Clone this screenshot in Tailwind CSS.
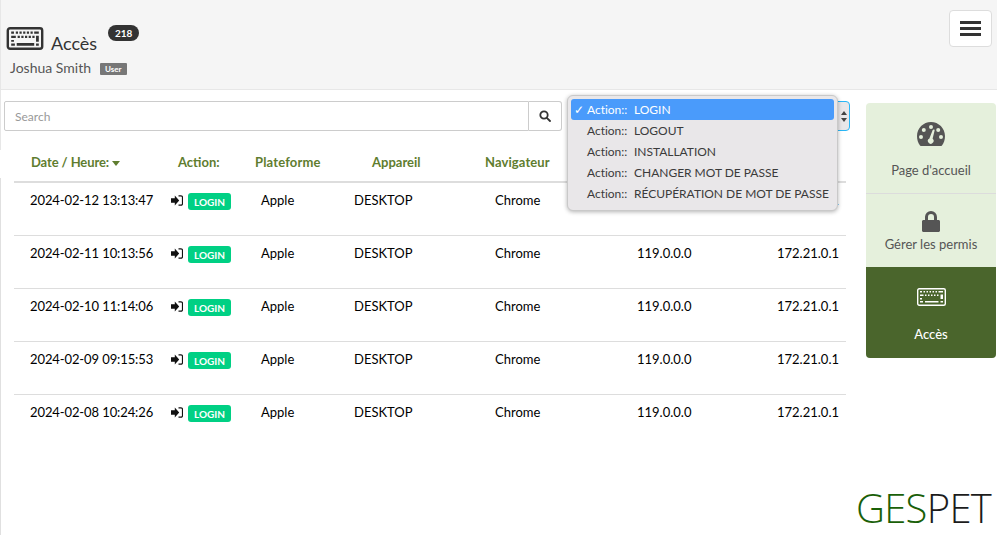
<!DOCTYPE html>
<html lang="fr">
<head>
  <meta charset="UTF-8"/>
  <title>Accès</title>
  <script src="https://cdn.jsdelivr.net/npm/@tailwindcss/browser@4"></script>
</head>
<body class="bg-white h-[535px] overflow-hidden font-['Lato','Liberation_Sans',sans-serif] text-[13px] text-black">

  <!-- Header -->
  <header class="h-[90px] bg-[#f5f5f5] border-b border-[#e7e7e7] border-l flex justify-between pl-[5px] pr-[5px]">
    <div>
      <div class="flex items-start pt-[25px] h-[57px]">
        <svg class="w-[38px] h-[23px] mt-[2px] text-[#333]" viewBox="0 0 40 25" fill="currentColor">
          <rect x="1.300" y="1.300" width="37.400" height="22.400" rx="2.500" fill="none" stroke="currentColor" stroke-width="2.600"/>
          <path d="M5 5h3v2.400H5zM10 5h2.400v2.400H10zM14 5h2.400v2.400H14zM18 5h2.400v2.400H18zM22 5h2.400v2.400H22zM26 5h2.400v2.400H26zM30 5h5v2.400h-5zM5 9.500h5v2.400H5zM12 9.500h2.400v2.400H12zM16 9.500h2.400v2.400H16zM20 9.500h2.400v2.400H20zM24 9.500h2.400v2.400H24zM28 9.500h2.400v2.400H28zM32 9.500h3v6.500h-3zM5 14h3v2H5zM5 18h4v2.400H5zM11 17.500h19v2.900H11zM32 18h3v2.400h-3z"/>
        </svg>
        <h1 class="text-[18px] leading-[22px] text-[#333] ml-[7px] mt-[7px]">Accès</h1>
        <span class="ml-[11px] w-[31px] h-[16px] rounded-full bg-[#333] text-white text-[10px] font-bold flex items-center justify-center">218</span>
      </div>
      <div class="flex items-center ml-[4px] mt-[1px]">
        <span class="text-[14px] leading-[20px] text-[#555]">Joshua Smith</span>
        <span class="ml-[9px] mt-[1px] px-[5px] h-[12px] bg-[#777] rounded-[1px] text-white text-[8px] font-bold flex items-center">User</span>
      </div>
    </div>
    <button class="mt-[10px] w-[43px] h-[37px] bg-white border border-[#ddd] rounded-[4px] flex flex-col items-center justify-center gap-[3px]">
      <span class="w-[21px] h-[3px] bg-[#333]"></span>
      <span class="w-[21px] h-[3px] bg-[#333]"></span>
      <span class="w-[21px] h-[3px] bg-[#333]"></span>
    </button>
  </header>

  <div class="flex relative">
    <!-- left edge line picks up again under the filters -->
    <span class="absolute left-0 top-[88px] bottom-0 w-px bg-[#e0e0e0]"></span>

    <main class="w-[866px]">
      <!-- Filters -->
      <div class="flex border-l border-[#e7e7e7] pl-[3px] pt-[11px] h-[60px]">
        <input placeholder="Search" class="w-[525px] h-[30px] border border-[#ccc] rounded-l-[2px] px-[10px] text-[12px] placeholder:text-[#999] bg-white"/>
        <button class="w-[33px] h-[30px] border border-l-0 border-[#ccc] rounded-r-[3px] flex items-center justify-center">
          <svg class="w-[12px] h-[12px]" viewBox="0 0 12 12" fill="none" stroke="#333" stroke-width="1.800"><circle cx="5" cy="5" r="3.700"/><path d="M7.800 7.800 11 11" stroke-linecap="round"/></svg>
        </button>
        <div class="ml-[5px] w-[283px] h-[30px] border border-[#29b6f6] rounded-[4px] bg-[#e9e7e9] flex items-center justify-end pr-[2px]">
          <svg class="w-[6px] h-[11px]" viewBox="0 0 6 11" fill="#444"><path d="M3 0 6 4H0zM3 11 0 7h6z"/></svg>
        </div>
      </div>

      <!-- Table -->
      <div class="ml-[14px] w-[832px]">
        <div class="flex h-[20px] box-content pt-[2px] pb-[9px] leading-[20px] font-bold text-[#5f7d2f] border-b-2 border-[#ddd] -mb-[3px]">
          <div class="w-[157px] pl-[17px] flex items-center gap-[3px]"><span class="tracking-[-0.1px]">Date / Heure:</span>
            <svg class="w-[8px] h-[5px] mt-[2px]" viewBox="0 0 8 5" fill="#5f7d2f"><path d="M0 0h8L4 5z"/></svg>
          </div>
          <div class="w-[84px] pl-[7px]">Action:</div>
          <div class="w-[99px] tracking-[0.15px]">Plateforme</div>
          <div class="w-[131px] pl-[18px]">Appareil</div>
          <div class="w-[152px] tracking-[0.1px]">Navigateur</div>
        </div>

        <div class="flex h-[56px] pt-[11px] leading-[18px] border-b border-[#ddd]">
          <div class="w-[157px] pl-[16px] tracking-[-0.1px]">2024-02-12 13:13:47</div>
          <div class="w-[84px] flex items-start gap-[5px] pt-[2px]">
            <svg class="w-[12px] h-[11px] mt-[2px]" viewBox="0 0 12 11"><path d="M0 3.300h3.800V.6l4.400 4.900-4.400 4.900V7.700H0z" fill="#111"/><path d="M7.500 .8H10a1.500 1.500 0 0 1 1.500 1.500v6.400A1.500 1.500 0 0 1 10 10.200H7.500" fill="none" stroke="#111" stroke-width="1.200"/></svg>
            <span class="w-[43px] h-[17px] bg-[#00d084] rounded-[3px] text-white text-[10px] font-bold flex items-center justify-center">LOGIN</span>
          </div>
          <div class="w-[99px] pl-[6px]">Apple</div>
          <div class="w-[131px]">DESKTOP</div>
          <div class="w-[152px] pl-[10px]">Chrome</div>
          <div class="w-[140px]">119.0.0.0</div>
          <div class="w-[61px] whitespace-nowrap">172.21.0.1</div>
        </div>
        <div class="flex h-[53px] pt-[8px] leading-[18px] border-b border-[#ddd]">
          <div class="w-[157px] pl-[16px] tracking-[-0.1px]">2024-02-11 10:13:56</div>
          <div class="w-[84px] flex items-start gap-[5px] pt-[2px]">
            <svg class="w-[12px] h-[11px] mt-[2px]" viewBox="0 0 12 11"><path d="M0 3.300h3.800V.6l4.400 4.900-4.400 4.900V7.700H0z" fill="#111"/><path d="M7.500 .8H10a1.500 1.500 0 0 1 1.500 1.500v6.400A1.500 1.500 0 0 1 10 10.200H7.500" fill="none" stroke="#111" stroke-width="1.200"/></svg>
            <span class="w-[43px] h-[17px] bg-[#00d084] rounded-[3px] text-white text-[10px] font-bold flex items-center justify-center">LOGIN</span>
          </div>
          <div class="w-[99px] pl-[6px]">Apple</div>
          <div class="w-[131px]">DESKTOP</div>
          <div class="w-[152px] pl-[10px]">Chrome</div>
          <div class="w-[140px]">119.0.0.0</div>
          <div class="w-[61px] whitespace-nowrap">172.21.0.1</div>
        </div>
        <div class="flex h-[53px] pt-[8px] leading-[18px] border-b border-[#ddd]">
          <div class="w-[157px] pl-[16px] tracking-[-0.1px]">2024-02-10 11:14:06</div>
          <div class="w-[84px] flex items-start gap-[5px] pt-[2px]">
            <svg class="w-[12px] h-[11px] mt-[2px]" viewBox="0 0 12 11"><path d="M0 3.300h3.800V.6l4.400 4.900-4.400 4.900V7.700H0z" fill="#111"/><path d="M7.500 .8H10a1.500 1.500 0 0 1 1.500 1.500v6.400A1.500 1.500 0 0 1 10 10.200H7.500" fill="none" stroke="#111" stroke-width="1.200"/></svg>
            <span class="w-[43px] h-[17px] bg-[#00d084] rounded-[3px] text-white text-[10px] font-bold flex items-center justify-center">LOGIN</span>
          </div>
          <div class="w-[99px] pl-[6px]">Apple</div>
          <div class="w-[131px]">DESKTOP</div>
          <div class="w-[152px] pl-[10px]">Chrome</div>
          <div class="w-[140px]">119.0.0.0</div>
          <div class="w-[61px] whitespace-nowrap">172.21.0.1</div>
        </div>
        <div class="flex h-[53px] pt-[8px] leading-[18px] border-b border-[#ddd]">
          <div class="w-[157px] pl-[16px] tracking-[-0.1px]">2024-02-09 09:15:53</div>
          <div class="w-[84px] flex items-start gap-[5px] pt-[2px]">
            <svg class="w-[12px] h-[11px] mt-[2px]" viewBox="0 0 12 11"><path d="M0 3.300h3.800V.6l4.400 4.900-4.400 4.900V7.700H0z" fill="#111"/><path d="M7.500 .8H10a1.500 1.500 0 0 1 1.500 1.500v6.400A1.500 1.500 0 0 1 10 10.200H7.500" fill="none" stroke="#111" stroke-width="1.200"/></svg>
            <span class="w-[43px] h-[17px] bg-[#00d084] rounded-[3px] text-white text-[10px] font-bold flex items-center justify-center">LOGIN</span>
          </div>
          <div class="w-[99px] pl-[6px]">Apple</div>
          <div class="w-[131px]">DESKTOP</div>
          <div class="w-[152px] pl-[10px]">Chrome</div>
          <div class="w-[140px]">119.0.0.0</div>
          <div class="w-[61px] whitespace-nowrap">172.21.0.1</div>
        </div>
        <div class="flex h-[53px] pt-[8px] leading-[18px]">
          <div class="w-[157px] pl-[16px] tracking-[-0.1px]">2024-02-08 10:24:26</div>
          <div class="w-[84px] flex items-start gap-[5px] pt-[2px]">
            <svg class="w-[12px] h-[11px] mt-[2px]" viewBox="0 0 12 11"><path d="M0 3.300h3.800V.6l4.400 4.900-4.400 4.900V7.700H0z" fill="#111"/><path d="M7.500 .8H10a1.500 1.500 0 0 1 1.500 1.500v6.400A1.500 1.500 0 0 1 10 10.200H7.500" fill="none" stroke="#111" stroke-width="1.200"/></svg>
            <span class="w-[43px] h-[17px] bg-[#00d084] rounded-[3px] text-white text-[10px] font-bold flex items-center justify-center">LOGIN</span>
          </div>
          <div class="w-[99px] pl-[6px]">Apple</div>
          <div class="w-[131px]">DESKTOP</div>
          <div class="w-[152px] pl-[10px]">Chrome</div>
          <div class="w-[140px]">119.0.0.0</div>
          <div class="w-[61px] whitespace-nowrap">172.21.0.1</div>
        </div>
      </div>
    </main>

    <!-- Side nav + logo -->
    <aside class="w-[131px] h-[445px] flex flex-col">
      <nav class="mt-[13px] w-[130px] rounded-[4px] overflow-hidden bg-[#e5f0dc] text-[#555] text-[13px] text-center">
        <a class="flex flex-col items-center h-[91px] pt-[19px] border-b border-[#dcdcdc]">
          <svg class="w-[28px] h-[24px]" viewBox="0 0 28 24" fill="#555"><path fill-rule="evenodd" d="M14 0C6.300 0 0 6.300 0 14c0 3.700 1.100 7.100 3 9.400.4.400.9.600 1.500.6h19c.6 0 1.100-.2 1.500-.6 1.900-2.300 3-5.700 3-9.400C28 6.300 21.700 0 14 0zM14 3a2 2 0 1 1 0 4 2 2 0 0 1 0-4zM6.800 6a2 2 0 1 1 0 4 2 2 0 0 1 0-4zM21.200 6a2 2 0 1 1 0 4 2 2 0 0 1 0-4zM4 13a2 2 0 1 1 0 4 2 2 0 0 1 0-4zM24 13a2 2 0 1 1 0 4 2 2 0 0 1 0-4zM17.600 8.500l-2 8.300a2.800 2.800 0 1 1-3.200-.4l3.300-8.300c.4-1 2.200-.7 1.900.4z"/></svg>
          <span class="mt-[15px] leading-[18px]">Page d'accueil</span>
        </a>
        <a class="flex flex-col items-center h-[73px] pt-[17px]">
          <svg class="w-[18px] h-[21px]" viewBox="0 0 18 21" fill="#555"><path fill-rule="evenodd" d="M3 9V6a6 6 0 0 1 12 0v3h1.500c.8 0 1.500.7 1.500 1.500v9c0 .8-.7 1.500-1.500 1.500h-15C.7 21 0 20.300 0 19.500v-9C0 9.700.7 9 1.500 9zM6 9h6V6a3 3 0 0 0-6 0z"/></svg>
          <span class="mt-[3px] leading-[18px]">Gérer les permis</span>
        </a>
        <a class="flex flex-col items-center h-[91px] pt-[21px] bg-[#4a652c] text-white font-medium">
          <svg class="w-[29px] h-[18px]" viewBox="0 0 29 18" fill="#fff">
            <rect x=".7" y=".7" width="27.600" height="16.600" rx="1.500" fill="none" stroke="#fff" stroke-width="1.400"/>
            <path d="M3 3h2v1.500H3zM6.500 3H8v1.500H6.500zM9.500 3H11v1.500H9.500zM12.500 3H14v1.500h-1.500zM15.500 3H17v1.500h-1.500zM18.500 3H20v1.500h-1.500zM21.500 3H26v1.500h-4.500zM3 6.500h3.500V8H3zM8 6.500h1.500V8H8zM11 6.500h1.500V8H11zM14 6.500h1.500V8H14zM17 6.500h1.500V8H17zM20 6.500h1.500V8H20zM23.500 6.500H26V11h-2.500zM3 10h2v1.500H3zM3 13h3v1.500H3zM8 13h13.500v1.500H8zM23.500 13H26v1.500h-2.500z"/>
          </svg>
          <span class="mt-[19px] leading-[18px]">Accès</span>
        </a>
      </nav>
      <div class="mt-auto -ml-[10px] font-['Open_Sans',sans-serif] font-light text-[40px] leading-[44px] tracking-[-0.7px] whitespace-nowrap pb-[5px]"><span class="text-[#1a6008]">GES</span><span class="text-[#1c1c1c]">PET</span></div>
    </aside>

    <!-- Open select menu -->
    <ul class="absolute left-[567px] top-[5px] w-[271px] h-[116px] bg-[#e9e7e9] rounded-[6px] border border-[#c9c9c9] shadow-[0_1px_4px_rgba(0,0,0,0.3)] px-[3px] pt-[3px] text-[12px] tracking-[-0.02px] text-[#3b3b3b]">
      <li class="h-[21px] rounded-[3px] bg-[#4a9bfb] text-white flex items-center pl-[3px]"><span class="w-[13px]">✓</span><span class="w-[47px]">Action::</span>LOGIN</li>
      <li class="h-[21px] flex items-center pl-[16px]"><span class="w-[47px]">Action::</span>LOGOUT</li>
      <li class="h-[21px] flex items-center pl-[16px]"><span class="w-[47px]">Action::</span>INSTALLATION</li>
      <li class="h-[21px] flex items-center pl-[16px]"><span class="w-[47px]">Action::</span>CHANGER MOT DE PASSE</li>
      <li class="h-[21px] flex items-center pl-[16px]"><span class="w-[47px]">Action::</span>RÉCUPÉRATION DE MOT DE PASSE</li>
    </ul>
  </div>
</body>
</html>
